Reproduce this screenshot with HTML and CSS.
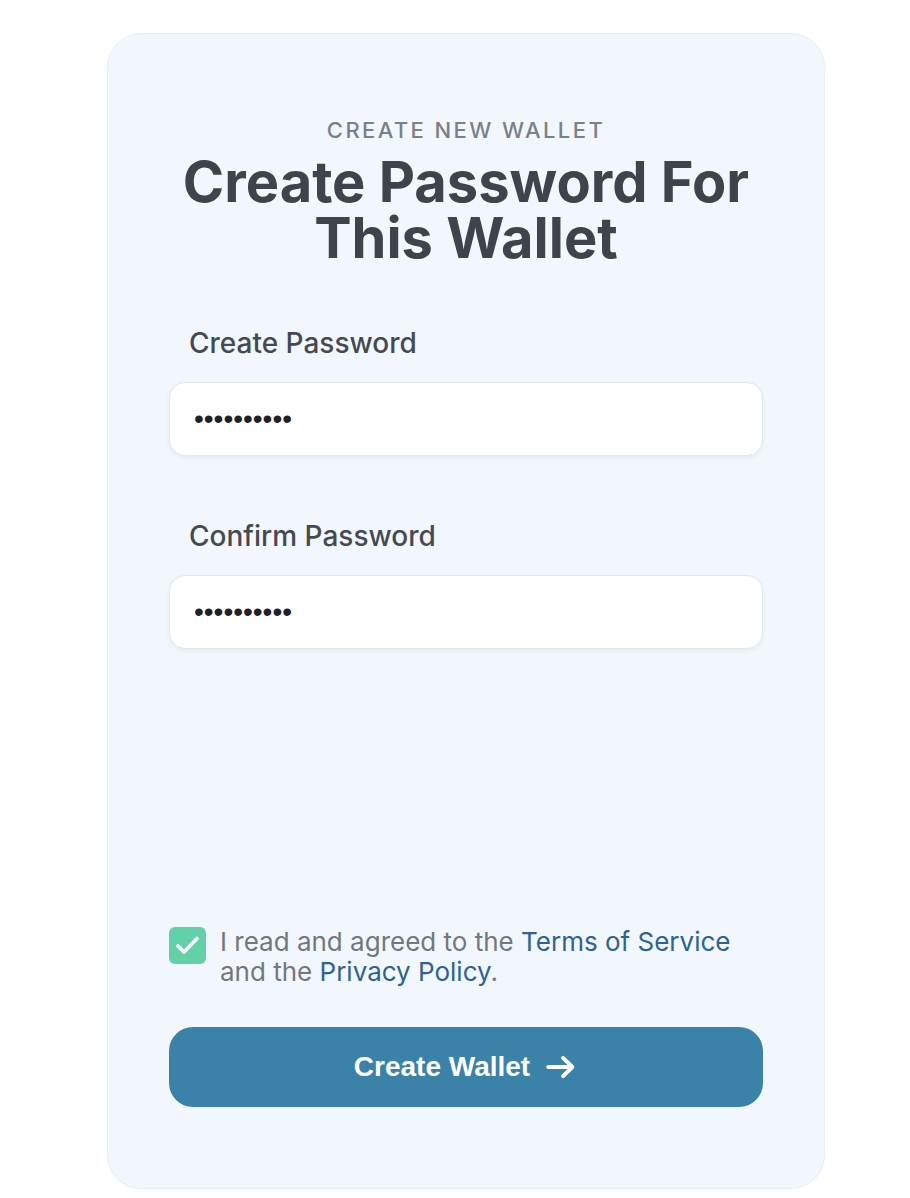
FILE: index.html
```html
<!DOCTYPE html>
<html lang="en">
<head>
<meta charset="utf-8">
<title>Create Password</title>
<link rel="stylesheet" href="styles.css">
</head>
<body>
<main class="card">
  <p class="eyebrow">CREATE NEW WALLET</p>
  <h1 class="title">Create Password For This Wallet</h1>

  <label class="field">
    <span class="field-label">Create Password</span>
    <input class="field-input" type="password" value="abcdefghij">
  </label>

  <label class="field field-second">
    <span class="field-label">Confirm Password</span>
    <input class="field-input" type="password" value="abcdefghij">
  </label>

  <div class="spacer"></div>

  <div class="agree">
    <span class="check" aria-hidden="true">
      <svg viewBox="0 0 37 37" width="37" height="37"><path d="M9 19l6 6L28 11.5" fill="none" stroke="#fff" stroke-width="3.6" stroke-linecap="round" stroke-linejoin="round"/></svg>
    </span>
    <p class="agree-text">I read and agreed to the <a href="#">Terms of Service</a> and the <a href="#">Privacy Policy</a>.</p>
  </div>

  <button class="cta" type="button">
    <span class="cta-label">Create Wallet</span>
    <svg viewBox="0 0 24 24" width="34" height="34" aria-hidden="true"><path d="M3 12h17M13.5 5.5l6.5 6.5-6.5 6.5" fill="none" stroke="#fff" stroke-width="2.8" stroke-linecap="round" stroke-linejoin="round"/></svg>
  </button>
</main>
</body>
</html>
```

FILE: styles.css
```css
* { box-sizing: border-box; }

html, body {
  margin: 0;
  background: #ffffff;
}

body {
  font-family: Inter, "Noto Sans", sans-serif;
}

.card {
  width: 718px;
  height: 1156px;
  margin: 33px 0 0 107px;
  padding: 84px 61px 81px 61px;
  background: #f2f7fd;
  border: 1px solid #e7edf4;
  border-radius: 34px;
  display: flex;
  flex-direction: column;
}

.eyebrow {
  margin: 0;
  text-align: center;
  font-size: 22px;
  line-height: 24px;
  font-weight: 500;
  letter-spacing: 2.4px;
  color: #7b8088;
}

.title {
  margin: 12px 0 0;
  text-align: center;
  font-size: 56px;
  line-height: 56px;
  font-weight: 700;
  letter-spacing: 0;
  color: #3f444b;
}

.field {
  display: flex;
  flex-direction: column;
  margin-top: 62px;
}

.field-second {
  margin-top: 65px;
}

.field-label {
  font-size: 28px;
  line-height: 30px;
  font-weight: 500;
  color: #454a52;
  padding-left: 20px;
  margin-bottom: 24px;
}

.field-input {
  height: 74px;
  width: 100%;
  border: 1px solid #e3e7eb;
  border-radius: 16px;
  background: #ffffff;
  box-shadow: 0 2px 4px rgba(30, 50, 80, 0.06);
  padding: 0 24px;
  font-family: "Liberation Sans", Arial, sans-serif;
  font-size: 28px;
  letter-spacing: 0;
  color: #1f2129;
  outline: none;
}

.spacer {
  flex: 1;
}

.agree {
  display: flex;
  align-items: flex-start;
  gap: 14px;
}

.check {
  flex: none;
  width: 37px;
  height: 37px;
  border-radius: 6px;
  background: #63d1a7;
  display: flex;
}

.agree-text {
  margin: 0;
  font-size: 26px;
  line-height: 30px;
  color: #72777f;
}

.agree-text a {
  color: #2c6392;
  text-decoration: none;
}

.cta {
  margin-top: 40px;
  height: 80px;
  width: 100%;
  border: none;
  border-radius: 24px;
  background: #3b82a8;
  color: #ffffff;
  font-family: "Liberation Sans", Arial, sans-serif;
  font-size: 28px;
  font-weight: 700;
  display: flex;
  align-items: center;
  justify-content: center;
  gap: 14px;
  cursor: pointer;
}

.cta-label {
  letter-spacing: 0;
}
```
